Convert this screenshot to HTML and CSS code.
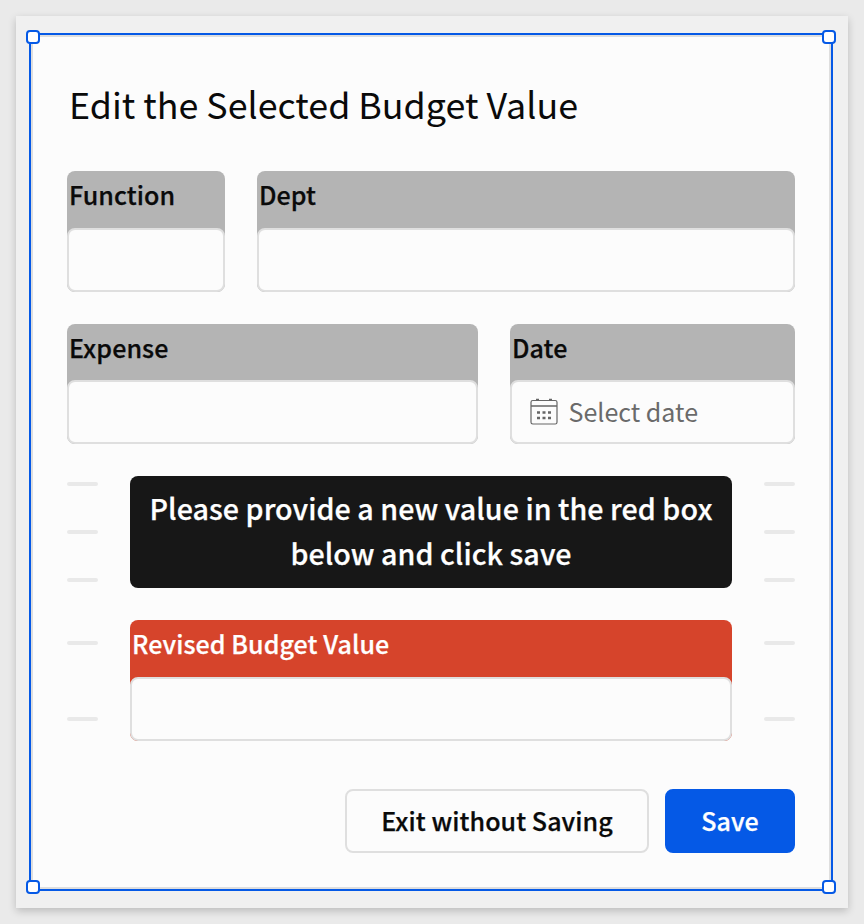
FILE: index.html
```
<!DOCTYPE html>
<html lang="en">
<head>
<meta charset="utf-8">
<title>Edit Budget Value</title>
<link rel="stylesheet" href="styles.css">
</head>
<body>
<main class="page">
  <section class="modal">
    <i class="handle top left"></i><i class="handle top right"></i><i class="handle bottom left"></i><i class="handle bottom right"></i>
    <h1>Edit the Selected Budget Value</h1>
    <div class="row first">
      <div class="field function"><label>Function</label><div class="input"></div></div>
      <div class="field dept"><label>Dept</label><div class="input"></div></div>
    </div>
    <div class="row second">
      <div class="field expense"><label>Expense</label><div class="input"></div></div>
      <div class="field date"><label>Date</label><div class="input">
        <svg width="28" height="28" viewBox="0 0 28 28" fill="none" stroke="#666">
          <rect x="1" y="2.500" width="26" height="23.500" rx="1.800" stroke-width="1.200"/>
          <path d="M1 8H27" stroke-width="1.500"/>
          <path d="M6 1.500h3M19 1.500h3" stroke-width="1.500"/>
          <path d="M7 14.500h3m2.500 0h3m2.500 0h3M7 20h3m2.500 0h3m2.500 0h3" stroke-width="2.500"/>
        </svg>
        <span class="placeholder">Select date</span></div></div>
    </div>
    <div class="middle">
      <div class="dashes"><i></i><i></i><i></i><i></i><i></i></div>
      <div class="center">
        <p class="notice">Please provide a new value in the red box<br>below and click save</p>
        <div class="field revised"><label>Revised Budget Value</label><div class="input"></div></div>
      </div>
      <div class="dashes"><i></i><i></i><i></i><i></i><i></i></div>
    </div>
    <div class="actions">
      <button class="exit">Exit without Saving</button>
      <button class="save">Save</button>
    </div>
  </section>
</main>
</body>
</html>
```
FILE: styles.css
```
* { box-sizing: border-box; }
body {
  margin: 0;
  height: 924px;
  padding: 16px;
  overflow: hidden;
  background: #eaeaea;
  color: #0a0a0a;
  font-family: "Noto Sans CJK JP", "Noto Sans", sans-serif;
}
.page {
  width: 832px;
  height: 892px;
  padding: 17px 15px 17px 13px;
  background: #f0f0f0;
  box-shadow: 0 3px 8px rgba(0, 0, 0, .2);
}
.modal {
  position: relative;
  width: 804px;
  height: 858px;
  padding: 36px;
  border: 2px solid #0559e6;
  box-shadow: inset 0 0 0 2px #dedede;
  background: #fcfcfc;
}
.handle {
  position: absolute;
  width: 14px;
  height: 14px;
  border: 2px solid #0559e6;
  border-radius: 4px;
  background: #fff;
}
.top { top: -5px; }
.bottom { bottom: -5px; }
.left { left: -5px; }
.right { right: -5px; }
h1 {
  margin: 0;
  padding: 2px 0 0 2px;
  height: 100px;
  font-size: 35.8px;
  font-weight: 400;
  line-height: 60px;
  white-space: nowrap;
}
.row { display: flex; gap: 32px; height: 121px; margin-bottom: 32px; }
.second { height: 120px; }
.field {
  display: flex;
  flex-direction: column;
  justify-content: space-between;
  border-radius: 8px;
  background: #b4b4b4;
}
.function { width: 158px; }
.dept { width: 538px; }
.expense { width: 411px; }
.date { width: 285px; }
label {
  height: 46px;
  padding-left: 2px;
  font-size: 25.06px;
  font-weight: 500;
  line-height: 46px;
  letter-spacing: .06px;
  white-space: nowrap;
  -webkit-text-stroke: .25px currentColor;
}
.input {
  display: flex;
  align-items: center;
  height: 64px;
  padding-left: 18px;
  border: 2px solid #dfdfdf;
  border-radius: 8px;
  background: #fcfcfc;
}
.placeholder { margin-left: 10.5px; padding-bottom: 2px; color: #6a6a6a; font-size: 25.06px; line-height: 40px; white-space: nowrap; }
.middle { display: flex; justify-content: space-between; height: 265px; }
.dashes { display: flex; flex-direction: column; gap: 44px; width: 31px; padding-top: 6px; }
.dashes i { height: 4px; border-radius: 2px; background: #e9e9e9; }
.dashes i:nth-child(4) { margin-top: 15px; }
.dashes i:nth-child(5) { margin-top: 28px; }
.center { width: 602px; }
.notice {
  height: 112px;
  margin: 0 0 32px;
  padding-top: 9px;
  border-radius: 8px;
  background: #171717;
  color: #fff;
  font-size: 28.64px;
  font-weight: 500;
  line-height: 45px;
  letter-spacing: .05px;
  text-align: center;
  white-space: nowrap;
  -webkit-text-stroke: .25px currentColor;
}
.revised { height: 121px; background: #d6442b; color: #fff; }
.actions { display: flex; justify-content: flex-end; gap: 16px; margin-top: 48px; }
button {
  height: 64px;
  padding: 0 0 2px;
  border: 2px solid #dfdfdf;
  border-radius: 8px;
  background: #fcfcfc;
  color: #0a0a0a;
  font: 500 25.06px "Noto Sans CJK JP", sans-serif;
  letter-spacing: .06px;
  white-space: nowrap;
  -webkit-text-stroke: .25px currentColor;
}
.exit { width: 304px; }
.save { width: 130px; border-color: #0559e6; background: #0559e6; color: #fff; }
```
